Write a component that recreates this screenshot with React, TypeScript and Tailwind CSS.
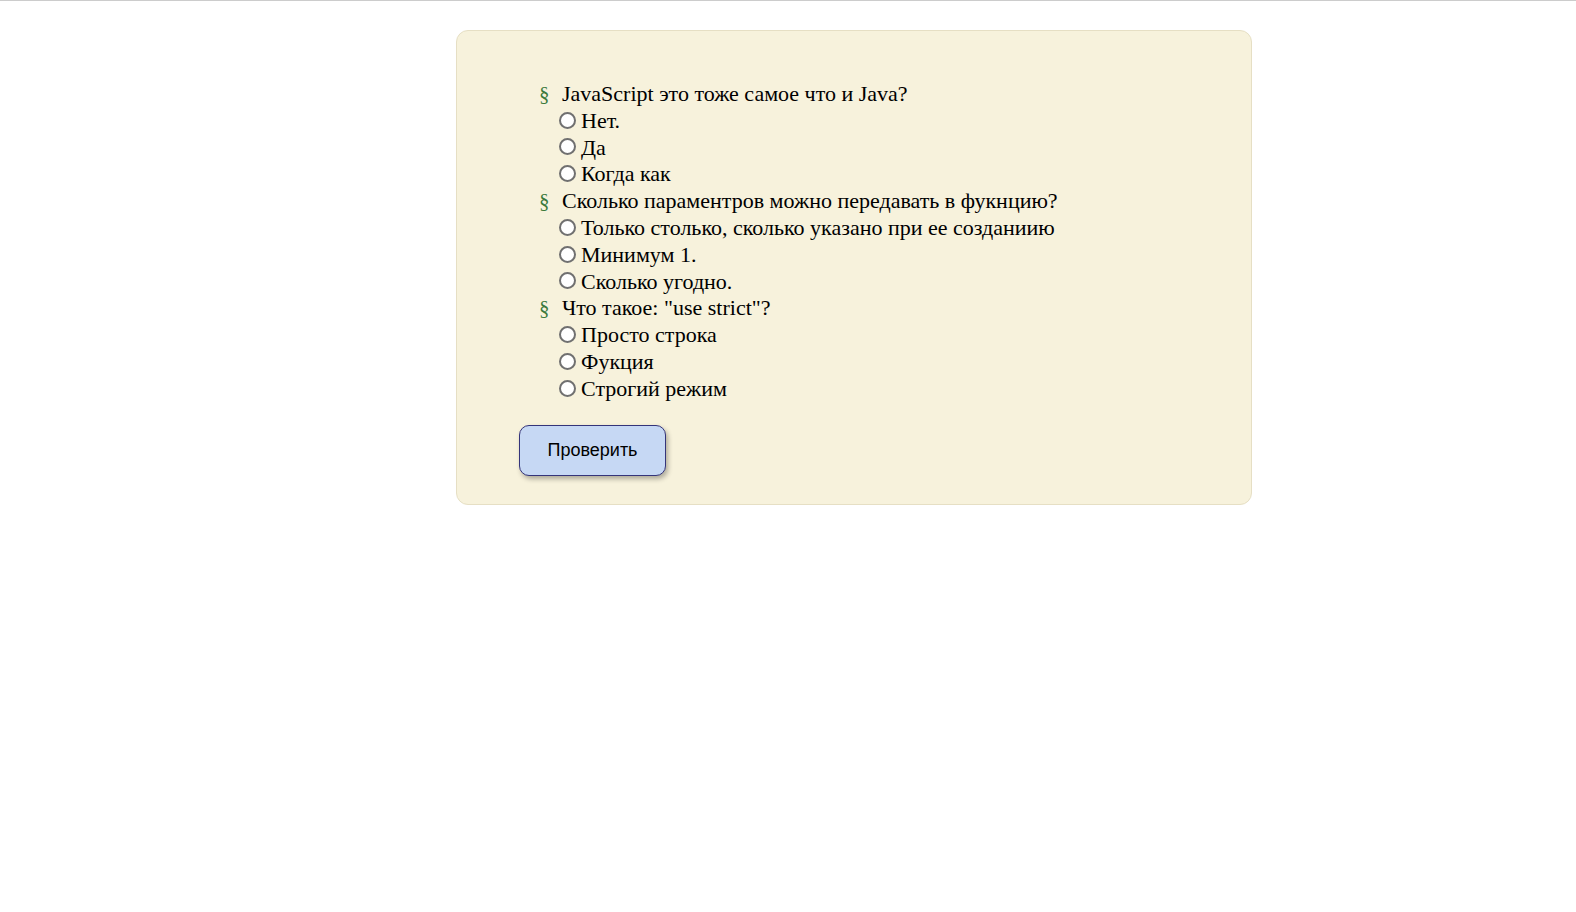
import React from 'react';

const questions = [
  { q: 'JavaScript это тоже самое что и Java?', a: ['Нет.', 'Да', 'Когда как'] },
  {
    q: 'Сколько параментров можно передавать в фукнцию?',
    a: ['Только столько, сколько указано при ее созданиию', 'Минимум 1.', 'Сколько угодно.'],
  },
  { q: 'Что такое: "use strict"?', a: ['Просто строка', 'Фукция', 'Строгий режим'] },
];

export default function App() {
  return (
    <div className="min-h-screen bg-white border-t border-[#cccccc]">
      <div className="ml-[456px] mt-[29px] w-[796px] rounded-[12px] border border-[#e6dfc4] bg-[#f7f2dc] pt-[50px] pb-[28px] pl-[62px]">
        <ul className="font-['Liberation_Serif',serif] text-[22px] leading-[26.8px] text-black">
          {questions.map((item, i) => (
            <li key={i}>
              <div className="flex items-center h-[26.8px]">
                <span className="w-[23px] pl-[20px] box-content text-[#3c7a3c] text-[21px]">§</span>
                <span>{item.q}</span>
              </div>
              {item.a.map((ans, j) => (
                <label key={j} className="flex items-center h-[26.8px] pl-[40px]">
                  <span className="w-[17px] h-[17px] shrink-0 rounded-full border-2 border-[#707070] bg-white mr-[5px] -mt-[2px]" />
                  <span>{ans}</span>
                </label>
              ))}
            </li>
          ))}
        </ul>
        <button className="mt-[22px] w-[147px] h-[51px] rounded-[10px] border border-[#34347a] bg-[#c6d8f4] shadow-[2px_3px_5px_rgba(0,0,0,0.3)] font-['Liberation_Sans',Arial,sans-serif] text-[18px] text-black">
          Проверить
        </button>
      </div>
    </div>
  );
}
